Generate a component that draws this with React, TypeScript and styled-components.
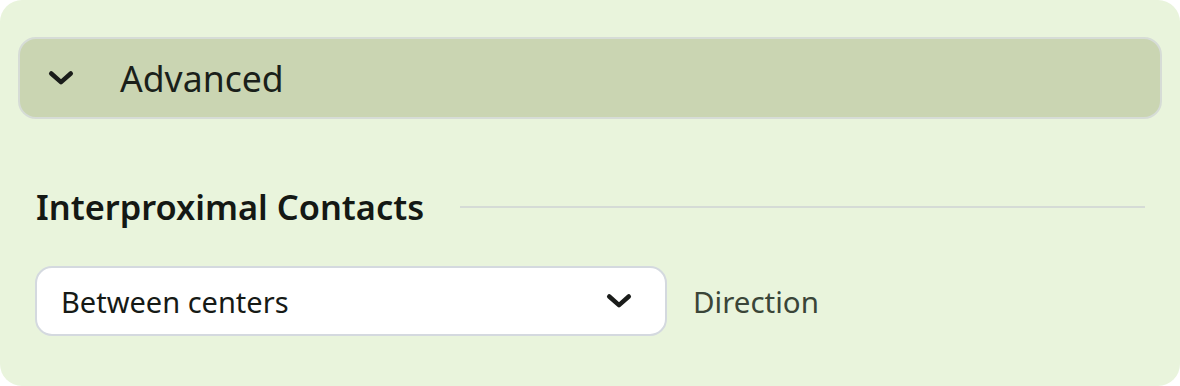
import React from "react";
import styled, { createGlobalStyle } from "styled-components";

const Global = createGlobalStyle`
  html, body { margin: 0; padding: 0; background: #ffffff; }
  body { font-family: "Noto Sans", "Open Sans", sans-serif; }
`;

const Card = styled.div`
  box-sizing: border-box;
  width: 1180px;
  height: 386px;
  background: #e9f4dc;
  border-radius: 22px;
  padding: 37px 18px 0 18px;
  display: flex;
  flex-direction: column;
`;

const Header = styled.div`
  box-sizing: border-box;
  height: 82px;
  background: #cad5b2;
  border: 2px solid #d6dcd6;
  border-radius: 18px;
  display: flex;
  align-items: center;
  padding-left: 28px;
  gap: 46px;
`;

const HeaderTitle = styled.span`
  font-size: 35.6px;
  color: #1a1f1a;
  line-height: 1;
  margin-top: 2px;
`;

const Section = styled.div`
  display: flex;
  flex-direction: column;
  padding: 66px 17px 0 18px;
`;

const SectionHead = styled.div`
  display: flex;
  align-items: center;
  gap: 36px;
  height: 44px;
`;

const SectionTitle = styled.h2`
  margin: 0;
  font-size: 34.4px;
  font-weight: 600;
  color: #141814;
  white-space: nowrap;
  line-height: 1;
`;

const Rule = styled.div`
  flex: 1;
  height: 2px;
  background: #d5dbd6;
`;

const Row = styled.div`
  display: flex;
  align-items: center;
  gap: 26px;
  margin-top: 37px;
`;

const Select = styled.div`
  box-sizing: border-box;
  width: 632px;
  height: 70px;
  background: #ffffff;
  border: 2px solid #d4d9df;
  border-radius: 17px;
  display: flex;
  align-items: center;
  justify-content: space-between;
  padding: 0 33px 0 24px;
  margin-left: -1px;
`;

const SelectText = styled.span`
  font-size: 29px;
  color: #161a16;
`;

const Label = styled.span`
  font-size: 29.5px;
  color: #3a4538;
`;

const Chevron: React.FC<{ size?: number }> = ({ size = 24 }) => (
  <svg width={size} height={size * 0.6} viewBox="0 0 24 14" fill="none">
    <polyline
      points="3,3 12,11 21,3"
      stroke="#1a1c1a"
      strokeWidth="4.2"
      strokeLinecap="round"
      strokeLinejoin="round"
    />
  </svg>
);

export default function App() {
  return (
    <>
      <Global />
      <Card>
        <Header>
          <Chevron size={26} />
          <HeaderTitle>Advanced</HeaderTitle>
        </Header>
        <Section>
          <SectionHead>
            <SectionTitle>Interproximal Contacts</SectionTitle>
            <Rule />
          </SectionHead>
          <Row>
            <Select>
              <SelectText>Between centers</SelectText>
              <Chevron size={26} />
            </Select>
            <Label>Direction</Label>
          </Row>
        </Section>
      </Card>
    </>
  );
}
